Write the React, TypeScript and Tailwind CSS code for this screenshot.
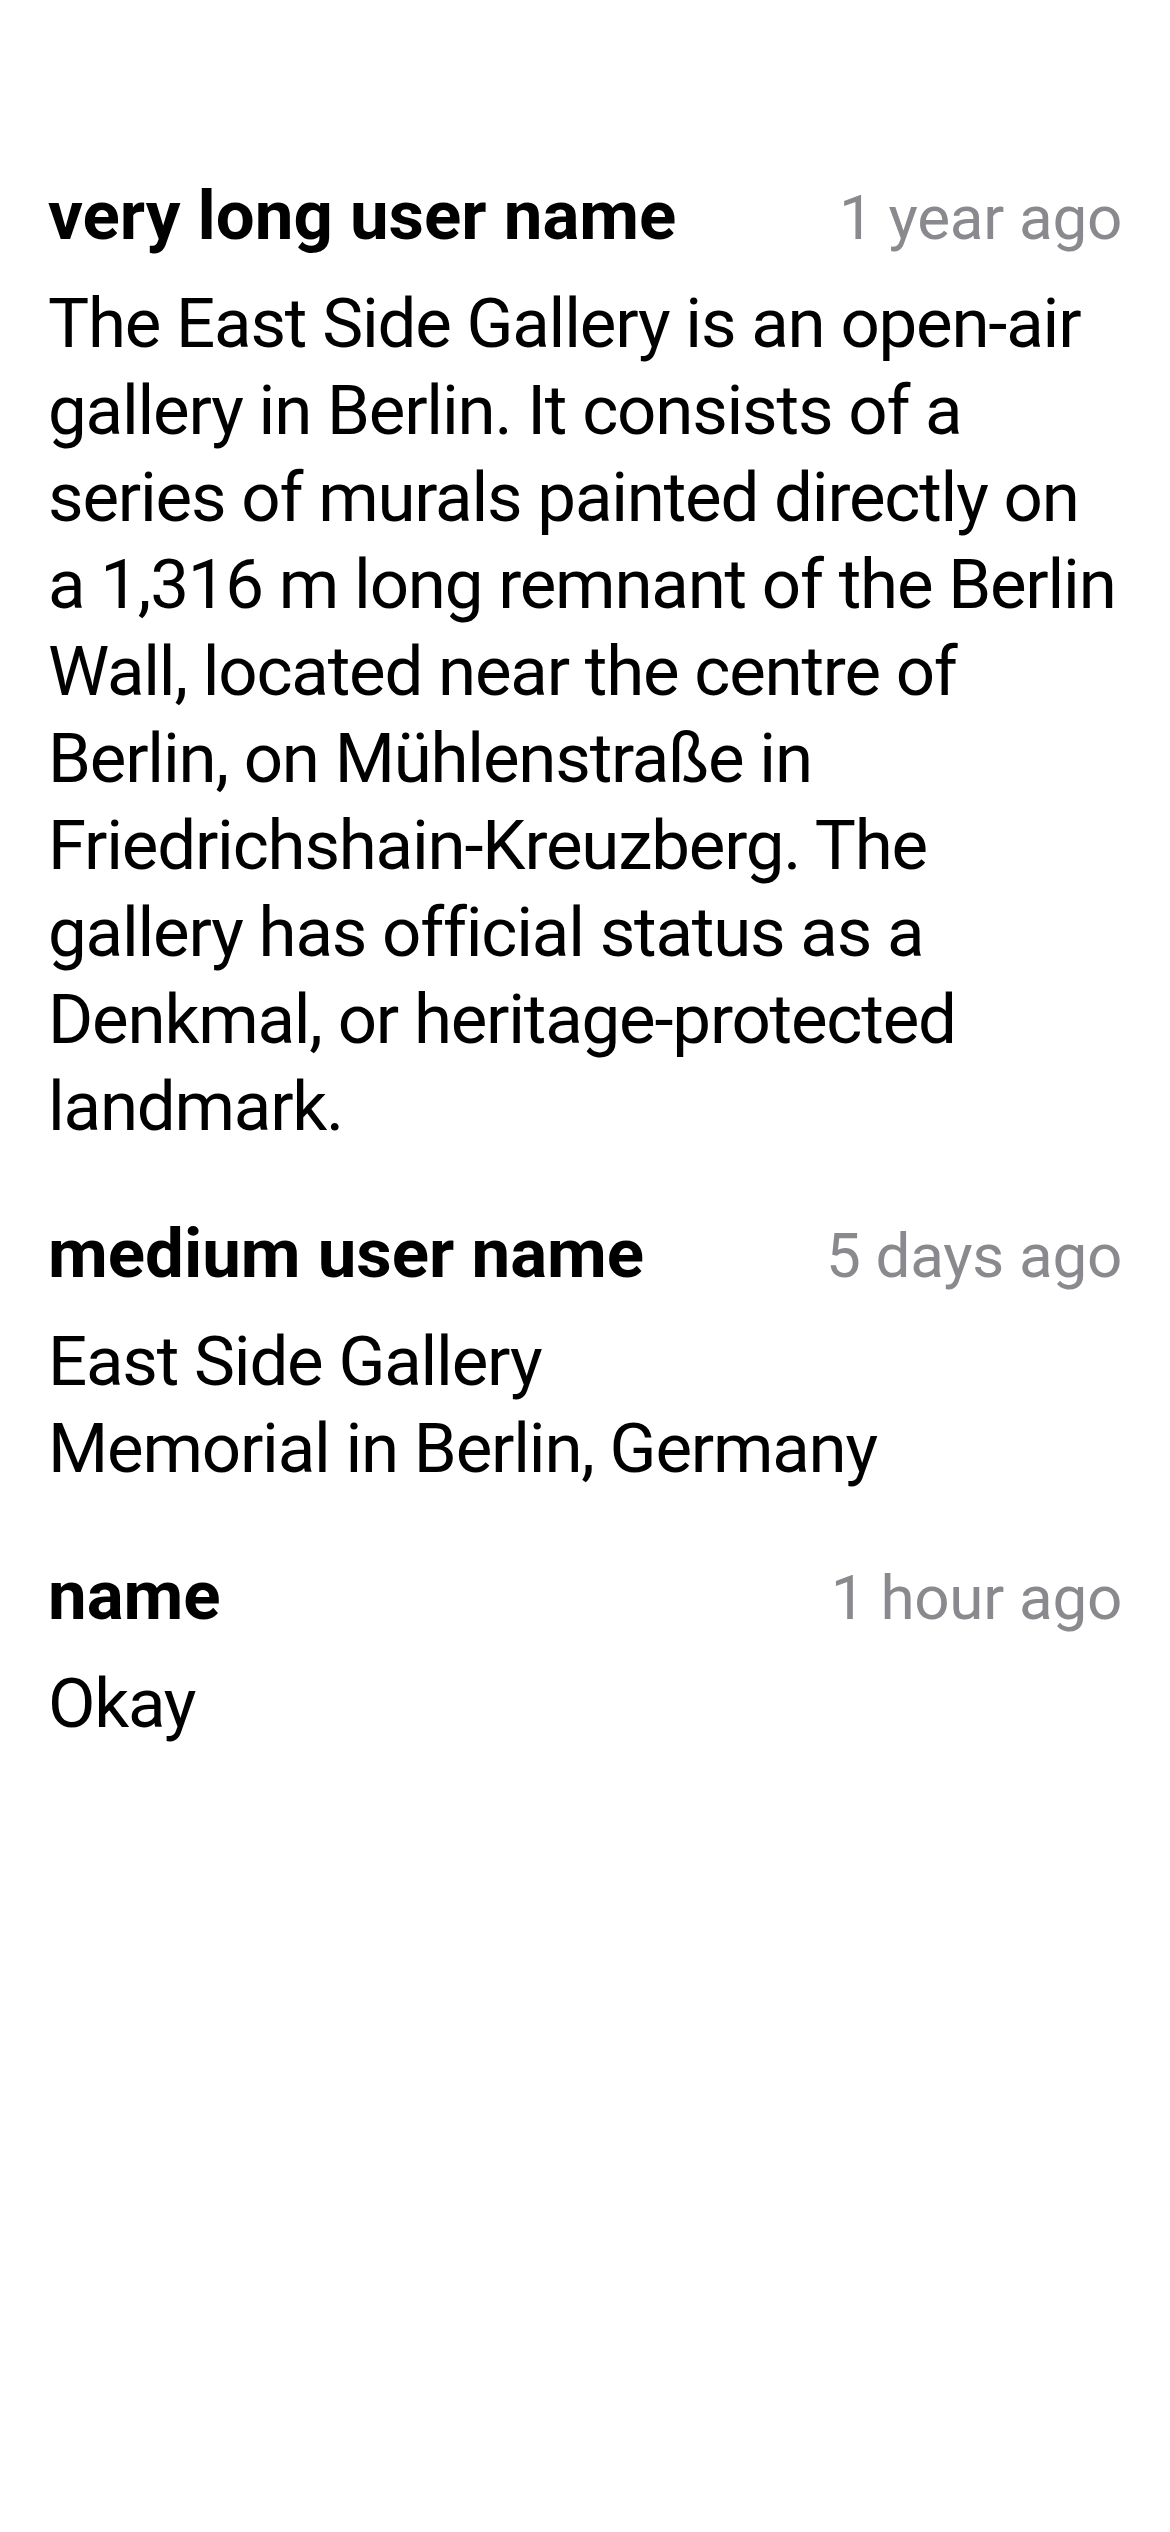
import React from "react";

type Comment = {
  name: string;
  time: string;
  text: string;
};

const comments: Comment[] = [
  {
    name: "very long user name",
    time: "1 year ago",
    text: "The East Side Gallery is an open-air gallery in Berlin. It consists of a series of murals painted directly on a 1,316 m long remnant of the Berlin Wall, located near the centre of Berlin, on Mühlenstraße in Friedrichshain-Kreuzberg. The gallery has official status as a Denkmal, or heritage-protected landmark.",
  },
  {
    name: "medium user name",
    time: "5 days ago",
    text: "East Side Gallery\nMemorial in Berlin, Germany",
  },
  {
    name: "name",
    time: "1 hour ago",
    text: "Okay",
  },
];

const CommentRow: React.FC<{ comment: Comment }> = ({ comment }) => {
  return (
    <div className="flex flex-col gap-[19px]">
      <div className="flex items-baseline justify-between gap-4">
        <span className="text-[69px] leading-[87px] font-bold text-black">
          {comment.name}
        </span>
        <span className="text-[62px] leading-[87px] tracking-[-0.3px] text-[#8a8a8e]">
          {comment.time}
        </span>
      </div>
      <p className="text-[69px] leading-[87px] tracking-[-1.2px] text-black whitespace-pre-line">
        {comment.text}
      </p>
    </div>
  );
};

export default function App() {
  return (
    <main
      className="min-h-screen bg-white px-12 pt-[172px]"
      style={{ fontFamily: "Roboto, 'Noto Sans', sans-serif" }}
    >
      <div className="flex flex-col gap-[60px]">
        {comments.map((c) => (
          <CommentRow key={c.name} comment={c} />
        ))}
      </div>
    </main>
  );
}
